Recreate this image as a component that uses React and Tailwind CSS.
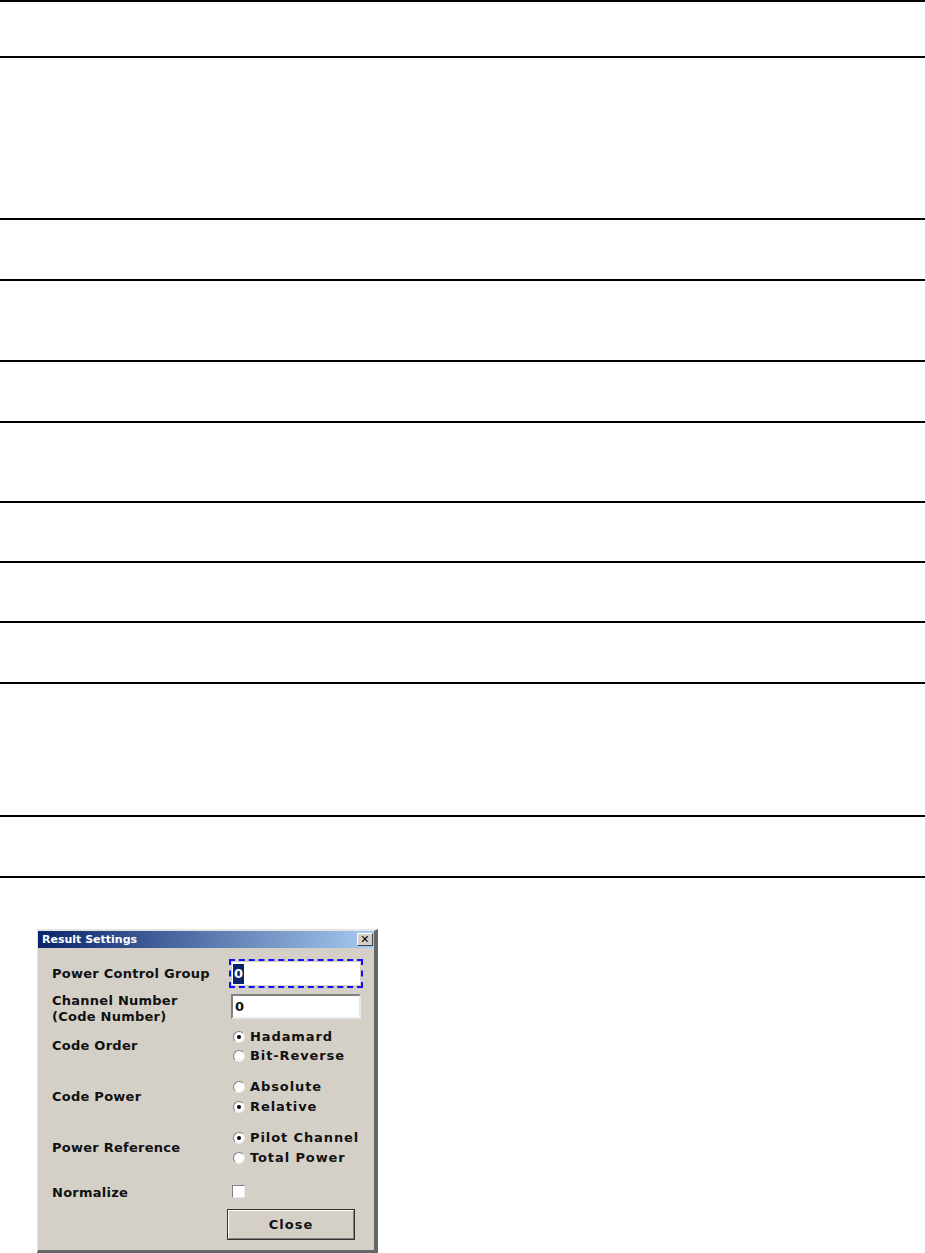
import React from "react";

const rows = [162, 61, 81, 61, 80, 60, 60, 61, 133, 61];

function Radio({ checked, label }) {
  return (
    <div className="flex items-center h-full">
      <span className="relative w-[12px] h-[12px] rounded-full bg-white border border-t-[#808080] border-l-[#808080] border-r-[#e8e8e8] border-b-[#e8e8e8] ml-[3px] shrink-0">
        {checked && <span className="absolute left-[3px] top-[3px] w-[4px] h-[4px] rounded-full bg-black" />}
      </span>
      <span className="ml-[5px] tracking-[0.9px]">{label}</span>
    </div>
  );
}

export default function App() {
  return (
    <div className="bg-white w-[925px] h-[1253px] overflow-hidden" style={{ fontFamily: '"DejaVu Sans", Verdana, sans-serif' }}>
      <div className="h-[58px] border-t-2 border-b-2 border-black" />
      {rows.map((h, i) => (
        <div key={i} className="border-b-2 border-black" style={{ height: h }} />
      ))}
      <div className="ml-[37px] mt-[51px] w-[341px] h-[324px] bg-[#d4d0c8] border-t-2 border-l border-r-4 border-b-[3px] border-t-[#e6e4e0] border-l-[#e6e4e0] border-r-[#666] border-b-[#666] flex flex-col text-[13px] font-bold text-[#111] tracking-[0.25px]">
        <div className="h-[17px] flex items-center justify-between pl-[4px] pr-[1px] text-white bg-[linear-gradient(to_right,#0a246a,#a6caf0)]">
          <span className="text-[11px] font-bold leading-none tracking-normal">Result Settings</span>
          <span className="w-[16px] h-[13px] bg-[#d4d0c8] border border-t-white border-l-white border-r-[#404040] border-b-[#404040] flex items-center justify-center text-black text-[11px] leading-none">✕</span>
        </div>
        <div className="flex flex-col pl-[14px]">
          <div className="mt-[9px] h-[33px] flex items-center">
            <div className="w-[177px]">Power Control Group</div>
            <div className="w-[134px] h-[29px] border-2 border-dashed border-[#1010ff] p-[1px]">
              <div className="w-full h-full bg-white flex items-center pl-[1px]">
                <span className="bg-[#0a246a] text-white font-bold px-[1px] h-[20px] flex items-center">0</span>
              </div>
            </div>
          </div>
          <div className="mt-[2px] h-[34px] flex items-center">
            <div className="w-[179px] leading-[16px]">Channel Number<br />(Code Number)</div>
            <div className="self-start mt-[2px] w-[130px] h-[25px] bg-white border-2 border-t-[#808080] border-l-[#808080] border-r-[#e8e8e8] border-b-[#e8e8e8] flex items-center pl-[2px]">0</div>
          </div>
          <div className="h-[40px] flex items-center">
            <div className="w-[178px]">Code Order</div>
            <div className="flex flex-col">
              <div className="h-[19px]"><Radio checked label="Hadamard" /></div>
              <div className="h-[19px]"><Radio label="Bit-Reverse" /></div>
            </div>
          </div>
          <div className="mt-[11px] h-[40px] flex items-center">
            <div className="w-[178px]">Code Power</div>
            <div className="flex flex-col">
              <div className="h-[20px]"><Radio label="Absolute" /></div>
              <div className="h-[20px]"><Radio checked label="Relative" /></div>
            </div>
          </div>
          <div className="mt-[11px] h-[40px] flex items-center">
            <div className="w-[178px]">Power Reference</div>
            <div className="flex flex-col">
              <div className="h-[20px]"><Radio checked label="Pilot Channel" /></div>
              <div className="h-[20px]"><Radio label="Total Power" /></div>
            </div>
          </div>
          <div className="mt-[14px] h-[22px] flex items-center">
            <div className="w-[180px]">Normalize</div>
            <div className="w-[13px] h-[13px] bg-white border border-t-[#808080] border-l-[#808080] border-r-[#e8e8e8] border-b-[#e8e8e8] -mt-[4px]" />
          </div>
          <div className="mt-[5px] ml-[175px] w-[128px] h-[31px] border border-[#333] bg-[#d4d0c8] flex">
            <div className="flex-1 border border-t-white border-l-white border-r-[#808080] border-b-[#808080] flex items-center justify-center tracking-[1px]">Close</div>
          </div>
        </div>
      </div>
    </div>
  );
}
